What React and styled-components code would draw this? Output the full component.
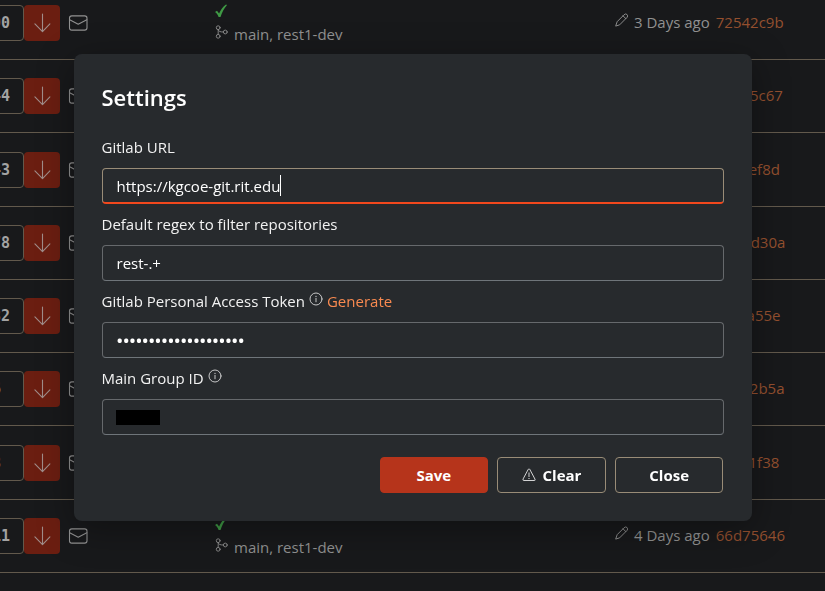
import React from "react";
import styled, { createGlobalStyle } from "styled-components";

const GlobalStyle = createGlobalStyle`
  *, *::before, *::after { box-sizing: border-box; }
  body {
    margin: 0;
    overflow: hidden;
    background: #18191b;
    color: #919191;
    font: 15px/24px "Open Sans", "Noto Sans", sans-serif;
  }
`;

/* ---------- icons ---------- */

const Svg = styled.svg`
  flex: none;
  width: ${(p) => p.$w}px;
  height: ${(p) => p.$h || p.$w}px;
  fill: none;
  stroke: currentColor;
  stroke-width: ${(p) => p.$stroke || 1};
  stroke-linecap: round;
  stroke-linejoin: round;
`;

const ArrowIcon = () => (
  <Svg $w={18} $h={20} viewBox="0 0 18 20" $stroke={1.1} aria-hidden="true">
    <path d="M9.500 1v17.500M1.900 10.800l7.600 7.800 7.400-7.800" />
  </Svg>
);

const MailIcon = () => (
  <Svg $w={20} $h={16} viewBox="0 0 20 16" $stroke={1.1} aria-hidden="true">
    <rect x="1.500" y=".9" width="17.500" height="14.200" rx="2.300" />
    <path d="M1.700 4.800 10.200 9.200l8.600-4.400" />
  </Svg>
);

const CheckIcon = () => (
  <Svg $w={12} $h={14} viewBox="0 0 12 14" aria-hidden="true">
    <path d="M0 8.100 2 6.700l2.100 2.700C5.500 6 8 2.500 11 .4L12 1C9 4.300 7 8.500 5.500 13H3.600C2.900 11 1.900 9.300 0 8.100Z" fill="#3f9a45" stroke="none" />
  </Svg>
);

const BranchIcon = () => (
  <Svg $w={13} $h={14} viewBox="0 0 13 14" $stroke={0.9} aria-hidden="true">
    <circle cx="3.200" cy="2.700" r="1.900" />
    <circle cx="3.200" cy="11.300" r="1.900" />
    <circle cx="10.300" cy="7" r="1.900" />
    <path d="M3.200 4.600v4.800M3.200 4.600C3.500 6.500 5 7 8.400 7" />
  </Svg>
);

const PencilIcon = () => (
  <Svg $w={13} $h={14} viewBox="0 0 13 14" $stroke={0.95} aria-hidden="true">
    <path d="M9.200 1.600a1.750 1.750 0 0 1 2.900 2.700L4.700 11.800.7 13.100 2 9.100ZM8 2.800l2.900 2.900" />
  </Svg>
);

const InfoIcon = () => (
  <Svg $w={14} viewBox="0 0 14 14" $stroke={0.9} aria-hidden="true">
    <circle cx="7" cy="7" r="6" />
    <path d="M7 6.300v3.500" />
    <circle cx="7" cy="4.300" r=".65" fill="currentColor" stroke="none" />
  </Svg>
);

const WarningIcon = () => (
  <Svg $w={14} viewBox="0 0 14 14" $stroke={0.8} aria-hidden="true">
    <path d="M6.200 1.400a.9.9 0 0 1 1.600 0l5.200 9.800a.9.9 0 0 1-.8 1.300H1.800a.9.9 0 0 1-.8-1.300ZM7 4.900v3.700" />
    <circle cx="7" cy="10.500" r=".6" fill="currentColor" stroke="none" />
  </Svg>
);

/* ---------- repository table ---------- */

const Page = styled.main`
  height: 100vh;
  overflow: hidden;
`;

const RepoTable = styled.table`
  width: 100%;
  margin-top: -13px;
  border-collapse: separate;
  border-spacing: 0;
  table-layout: fixed;
`;

const Row = styled.tr`
  height: 73px;
  &:nth-child(4n + 3) { height: 74px; }
`;

const Cell = styled.td`
  width: ${(p) => (p.$w ? `${p.$w}px` : "auto")};
  padding: 0 0 ${(p) => (p.$text ? 2 : 0)}px;
  border-bottom: 1px solid #62594c;
  white-space: nowrap;
`;

const PullGroup = styled.div`
  display: flex;
  justify-content: flex-end;
`;

const Count = styled.span`
  flex: none;
  width: 64px;
  height: 36px;
  padding-right: 13px;
  border: 1px solid #62594c;
  border-radius: 4px;
  color: #a3a3a3;
  font: bold 15px/34px "DejaVu Sans Mono", monospace;
  text-align: right;
  white-space: pre;
`;

const PullButton = styled.button`
  display: grid;
  flex: none;
  place-items: center;
  width: 36px;
  height: 36px;
  padding: 0;
  border: 0;
  border-radius: 4px;
  background: #6b1e11;
  color: #a08d8a;
`;

const MailButton = styled.button`
  display: grid;
  margin-left: 8px;
  padding: 0;
  border: 0;
  background: none;
  color: #919191;
`;

const Line = styled.div`
  display: flex;
  align-items: center;
  gap: 6px;
  height: ${(p) => (p.$mark ? 24 : 22)}px;
`;

const LineIcon = styled.span`
  display: grid;
  padding-bottom: 4px;
`;

const CommitLink = styled.a`
  color: #94502f;
  text-decoration: none;
`;

const repos = [
  { count: "90", age: "3 Days ago", hash: "72542c9b" },
  { count: "44", age: "3 Days ago", hash: "84e25c67" },
  { count: "43", age: "3 Days ago", hash: "6c19ef8d" },
  { count: "78", age: "3 Days ago", hash: "90b4d30a" },
  { count: "32", age: "3 Days ago", hash: "3f84a55e" },
  { count: "6 ", age: "3 Days ago", hash: "a7092b5a" },
  { count: "8 ", age: "3 Days ago", hash: "5e0c1f38" },
  { count: "11", age: "4 Days ago", hash: "66d75646" },
];

const RepoRow = ({ count, age, hash }) => (
  <Row>
    <Cell $w={60}>
      <PullGroup>
        <Count>{count}</Count>
        <PullButton type="button" aria-label="Pull"><ArrowIcon /></PullButton>
      </PullGroup>
    </Cell>
    <Cell $w={155}>
      <MailButton type="button" aria-label="Email"><MailIcon /></MailButton>
    </Cell>
    <Cell $text>
      <Line $mark><CheckIcon /></Line>
      <Line>
        <LineIcon><BranchIcon /></LineIcon>
        <span>main, rest1-dev</span>
      </Line>
    </Cell>
    <Cell $w={210} $text>
      <Line>
        <LineIcon><PencilIcon /></LineIcon>
        <span>{age}</span>
        <CommitLink href="#commit">{hash}</CommitLink>
      </Line>
    </Cell>
  </Row>
);

/* ---------- settings dialog ---------- */

const Overlay = styled.div`
  position: fixed;
  inset: 0;
  display: flex;
  align-items: center;
  justify-content: center;
  padding: 0 16px 16px;
`;

const Dialog = styled.form`
  width: 100%;
  max-width: 678px;
  padding: 28px;
  border-radius: 8px;
  background: #272a2d;
  box-shadow: 0 8px 36px rgba(0, 0, 0, 0.35);
  color: #f2f2f2;
`;

const Title = styled.h2`
  margin: 0 0 23px;
  color: #fff;
  font-size: 22px;
  font-weight: 600;
  line-height: 30px;
`;

const Fields = styled.div`
  display: grid;
  gap: 8px;
`;

const Field = styled.div`
  display: grid;
  gap: 9px;
`;

const LabelRow = styled.div`
  display: flex;
  align-items: center;
  gap: 4px;
  height: 24px;
`;

const Hint = styled.span`
  display: grid;
  padding-bottom: 4px;
  color: #d8d8d8;
`;

const TokenLink = styled.a`
  color: #f98a50;
  text-decoration: none;
`;

const InputBox = styled.div`
  display: flex;
  align-items: center;
  height: 36px;
  padding: 0 14px;
  border: 1px solid ${(p) => (p.$active ? "#998c77" : "#66696c")};
  border-bottom: ${(p) => (p.$active ? "2px solid #f2481d" : "1px solid #6f757a")};
  border-radius: 4px;
  position: relative;
`;

const Input = styled.input`
  flex: ${(p) => (p.$active ? "none" : "1")};
  field-sizing: ${(p) => (p.$active ? "content" : "fixed")};
  min-width: 0;
  height: 33px;
  padding: 0;
  border: 0;
  outline: 0;
  background: transparent;
  color: #fff;
  caret-color: transparent;
  font: inherit;
  font-size: ${(p) => (p.type === "password" ? 17 : 15)}px;
  font-weight: ${(p) => (p.type === "password" ? 600 : 400)};
`;

const Caret = styled.span`
  width: 1px;
  height: 21px;
  background: #fff;
`;

const Redaction = styled.span`
  position: absolute;
  top: 10px;
  left: 13px;
  width: 44px;
  height: 15px;
  background: #000;
`;

const Actions = styled.div`
  display: grid;
  grid-template-columns: repeat(3, 1fr);
  gap: 9px;
  width: 344px;
  max-width: 100%;
  margin: 22px 0 0 auto;
`;

const Button = styled.button`
  display: flex;
  align-items: center;
  justify-content: center;
  gap: 7px;
  height: 36px;
  padding: 0;
  border: 1px solid ${(p) => (p.$primary ? "#b6341b" : "#998c77")};
  border-radius: 4px;
  background: ${(p) => (p.$primary ? "#b6341b" : "transparent")};
  color: #fff;
  font: 700 15px/24px "Open Sans", "Noto Sans", sans-serif;
`;

const SettingField = ({ id, label, hint, link, type = "text", value, active, redacted }) => (
  <Field>
    <LabelRow>
      <label htmlFor={id}>{label}</label>
      {hint && <Hint><InfoIcon /></Hint>}
      {link && <TokenLink href="#generate">{link}</TokenLink>}
    </LabelRow>
    <InputBox $active={active}>
      <Input id={id} type={type} defaultValue={value} $active={active} autoComplete="off" spellCheck={false} />
      {active && <Caret />}
      {redacted && <Redaction />}
    </InputBox>
  </Field>
);

export default function App() {
  return (
    <>
      <GlobalStyle />
      <Page>
        <RepoTable>
          <tbody>
            {repos.map((repo) => <RepoRow key={repo.hash} {...repo} />)}
          </tbody>
        </RepoTable>
      </Page>
      <Overlay>
        <Dialog role="dialog" aria-labelledby="settings-title" onSubmit={(e) => e.preventDefault()}>
          <Title id="settings-title">Settings</Title>
          <Fields>
            <SettingField id="url" label="Gitlab URL" value="https://kgcoe-git.rit.edu" active />
            <SettingField id="regex" label="Default regex to filter repositories" value="rest-.+" />
            <SettingField id="token" label="Gitlab Personal Access Token" hint link="Generate" type="password" value="abcdefghijklmnopqrst" />
            <SettingField id="group" label="Main Group ID" hint redacted />
          </Fields>
          <Actions>
            <Button type="submit" $primary>Save</Button>
            <Button type="button"><WarningIcon />Clear</Button>
            <Button type="button">Close</Button>
          </Actions>
        </Dialog>
      </Overlay>
    </>
  );
}
